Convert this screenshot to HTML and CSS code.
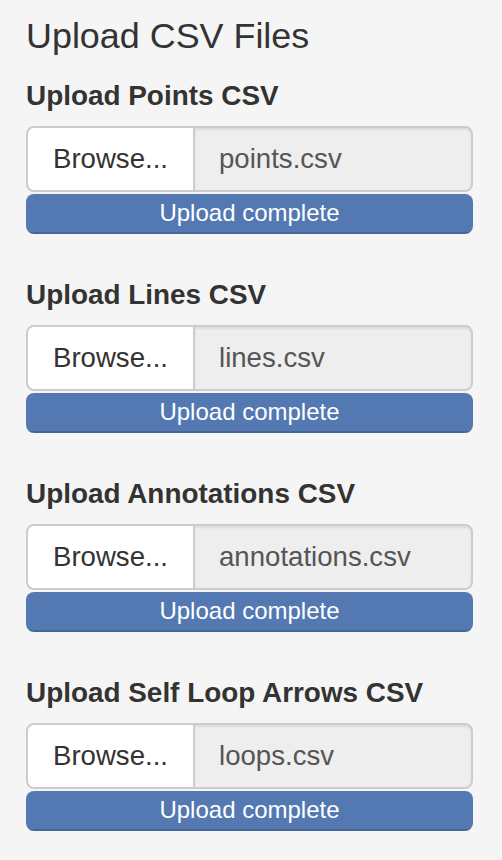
FILE: index.html
```html
<!DOCTYPE html>
<html>
<head>
<meta charset="utf-8">
<link rel="stylesheet" href="styles.css">
</head>
<body>
<div class="panel">
  <h4 class="title">Upload CSV Files</h4>

  <div class="group">
    <label class="label">Upload Points CSV</label>
    <div class="input-group">
      <span class="browse">Browse...</span>
      <span class="filename">points.csv</span>
    </div>
    <div class="progress"><div class="bar">Upload complete</div></div>
  </div>

  <div class="group">
    <label class="label">Upload Lines CSV</label>
    <div class="input-group">
      <span class="browse">Browse...</span>
      <span class="filename">lines.csv</span>
    </div>
    <div class="progress"><div class="bar">Upload complete</div></div>
  </div>

  <div class="group">
    <label class="label">Upload Annotations CSV</label>
    <div class="input-group">
      <span class="browse">Browse...</span>
      <span class="filename">annotations.csv</span>
    </div>
    <div class="progress"><div class="bar">Upload complete</div></div>
  </div>

  <div class="group">
    <label class="label">Upload Self Loop Arrows CSV</label>
    <div class="input-group">
      <span class="browse">Browse...</span>
      <span class="filename">loops.csv</span>
    </div>
    <div class="progress"><div class="bar">Upload complete</div></div>
  </div>
</div>
</body>
</html>
```
FILE: styles.css
```css
html, body {
  margin: 0;
  padding: 0;
  background: #f5f5f5;
}
body {
  font-family: "Liberation Sans", Arial, Helvetica, sans-serif;
  color: #333333;
}
.panel {
  padding: 0 29px 0 26px;
}
.title {
  font-size: 35.9px;
  font-weight: 400;
  line-height: 39.6px;
  margin: 17px 0 19px;
}
.group {
  margin-bottom: 41px;
}
.label {
  display: block;
  font-size: 27.9px;
  font-weight: 700;
  line-height: 40px;
  margin-bottom: 10px;
}
.input-group {
  display: flex;
  height: 66px;
}
.browse {
  box-sizing: border-box;
  display: flex;
  align-items: center;
  height: 66px;
  padding: 0 25px 0 25px;
  background: #ffffff;
  border: 2px solid #cccccc;
  border-radius: 8px 0 0 8px;
  font-size: 27.6px;
  color: #333333;
}
.filename {
  box-sizing: border-box;
  flex: 1;
  display: flex;
  align-items: center;
  height: 66px;
  margin-left: -2px;
  padding: 0 24px;
  background: #eeeeee;
  border: 2px solid #cccccc;
  border-radius: 0 8px 8px 0;
  box-shadow: inset 0 2px 2px rgba(0, 0, 0, 0.075);
  font-size: 27.6px;
  color: #555555;
}
.progress {
  margin-top: 2px;
  height: 40px;
  border-radius: 8px;
  overflow: hidden;
  background: #5378b2;
}
.bar {
  height: 40px;
  line-height: 38px;
  text-align: center;
  color: #ffffff;
  font-size: 24px;
  background: #5378b2;
  box-shadow: inset 0 -2px 0 rgba(0, 0, 0, 0.15);
}
```
